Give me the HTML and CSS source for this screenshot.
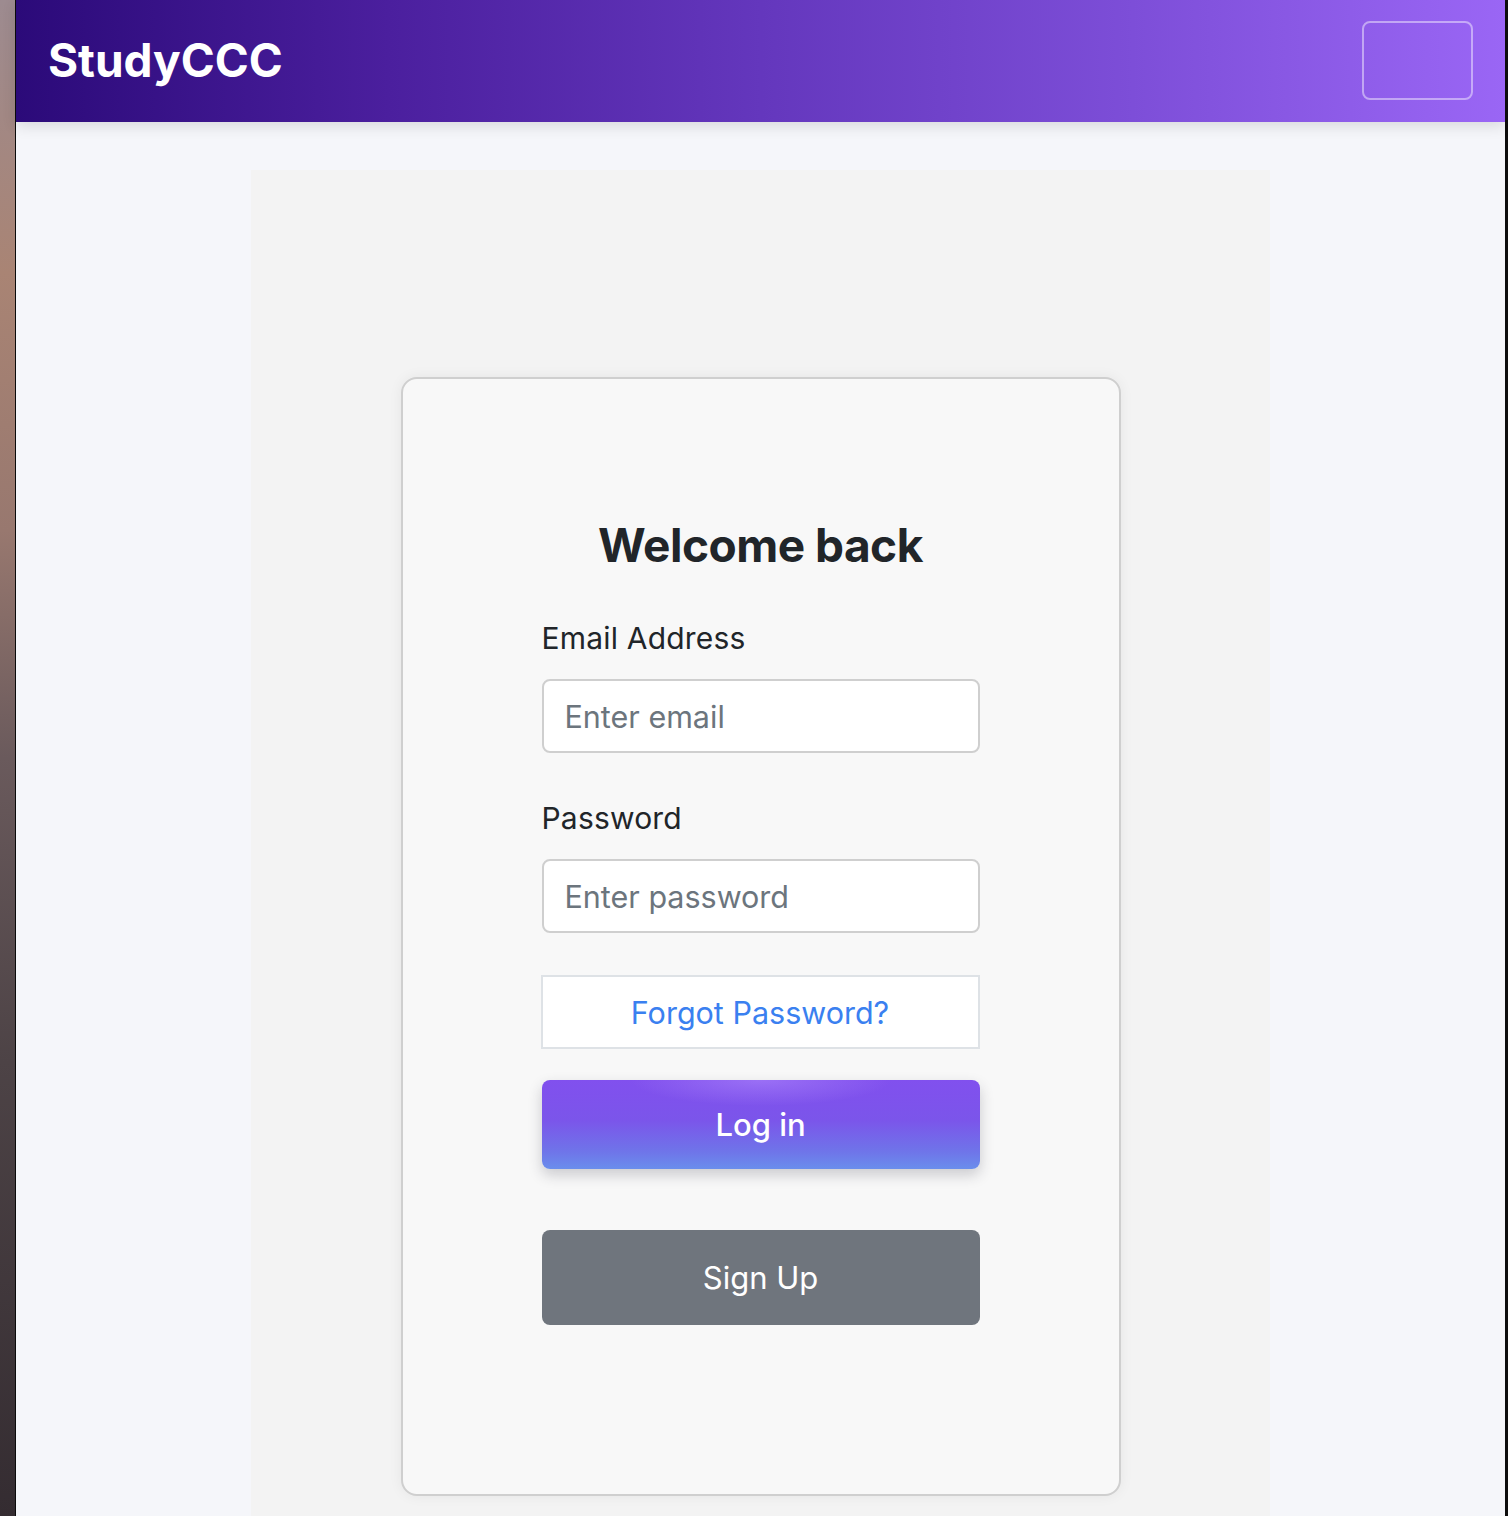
FILE: index.html
```html
<!DOCTYPE html>
<html lang="en">
<head>
<meta charset="utf-8">
<title>StudyCCC</title>
<link rel="stylesheet" href="styles.css">
</head>
<body>
<div class="desk-left"></div>
<div class="window">
  <header class="topbar">
    <div class="brand">StudyCCC</div>
    <button class="menu-btn" type="button" aria-label="Menu"></button>
  </header>
  <main class="main">
    <section class="panel">
      <form class="card">
        <h1 class="title">Welcome back</h1>
        <label class="label" for="email">Email Address</label>
        <input class="field" id="email" type="email" placeholder="Enter email">
        <label class="label label-pw" for="pw">Password</label>
        <input class="field" id="pw" type="password" placeholder="Enter password">
        <button class="btn-forgot" type="button">Forgot Password?</button>
        <button class="btn-login" type="button">Log in</button>
        <button class="btn-signup" type="button">Sign Up</button>
      </form>
    </section>
  </main>
</div>
<div class="desk-right"></div>
</body>
</html>
```
FILE: styles.css
```css
* { box-sizing: border-box; }
html, body { margin: 0; padding: 0; height: 100%; }
body {
  display: flex;
  width: 1508px;
  height: 1516px;
  overflow: hidden;
  background: #111;
  font-family: Inter, "Noto Sans", sans-serif;
}
.desk-left {
  width: 16px;
  flex: none;
  background: linear-gradient(180deg, #9d8b90 0%, #a98474 18%, #98786f 35%, #6a5a5c 50%, #4d4346 70%, #342c31 100%);
  border-right: 1px solid #0b0b0b;
}
.desk-right {
  width: 3px;
  flex: none;
  background: #0d0d0d;
}
.window {
  flex: 1;
  display: flex;
  flex-direction: column;
  background: #f5f6fa;
  min-width: 0;
}
.topbar {
  height: 122px;
  flex: none;
  display: flex;
  align-items: center;
  justify-content: space-between;
  padding: 0 32px 0 32px;
  background: linear-gradient(90deg, #2b0a79 0%, #4b1f9e 25%, #6437bd 50%, #7d4ed8 75%, #9a66f5 100%);
  box-shadow: 0 4px 14px rgba(0, 0, 0, 0.12);
  position: relative;
  z-index: 1;
}
.brand {
  color: #fff;
  font-family: Inter, "Liberation Sans", sans-serif;
  font-weight: 700;
  font-size: 46px;
  letter-spacing: 0;
  margin-top: -2px;
}
.menu-btn {
  width: 111px;
  height: 79px;
  margin-top: -2px;
  background: transparent;
  border: 2px solid rgba(255, 255, 255, 0.45);
  border-radius: 8px;
}
.main {
  flex: 1;
  padding-top: 48px;
  display: flex;
  justify-content: center;
}
.panel {
  width: 1019px;
  min-height: 1400px;
  background: #f3f3f3;
  padding-top: 207px;
  display: flex;
  justify-content: center;
  align-items: flex-start;
}
.card {
  width: 720px;
  height: 1119px;
  background: #f8f8f8;
  border: 2px solid #cfcfcf;
  border-radius: 16px;
  box-shadow: 0 0 14px rgba(0, 0, 0, 0.06);
  padding: 139px 139px 0 139px;
  display: flex;
  flex-direction: column;
}
.title {
  margin: 0;
  text-align: center;
  font-size: 46px;
  line-height: 55px;
  font-weight: 700;
  color: #212529;
  letter-spacing: -0.5px;
}
.label {
  margin-top: 48px;
  font-size: 30px;
  line-height: 35px;
  letter-spacing: 0.2px;
  color: #212529;
}
.label-pw { margin-top: 48px; }
.field {
  margin-top: 23px;
  width: 100%;
  height: 74px;
  border: 2px solid #cfcfcf;
  border-radius: 8px;
  background: #fff;
  padding: 0 21px;
  font-family: inherit;
  font-size: 30.5px;
  color: #212529;
}
.field::placeholder { color: #6c757d; }
.btn-forgot {
  margin-top: 42px;
  margin-left: -1px;
  width: calc(100% + 1px);
  height: 74px;
  background: #fff;
  border: 2px solid #dee2e6;
  border-radius: 0;
  font-family: inherit;
  font-size: 30.5px;
  color: #3a80f0;
}
.btn-login {
  margin-top: 31px;
  width: 100%;
  height: 89px;
  border: none;
  border-radius: 8px;
  background:
    radial-gradient(ellipse 130px 26px at 50% 0%, rgba(185, 150, 255, 0.45), rgba(185, 150, 255, 0) 100%),
    linear-gradient(180deg, #8150ee 0%, #7b55ea 45%, #6f74e9 80%, #6a8eec 100%);
  box-shadow: 0 6px 14px rgba(40, 40, 60, 0.22);
  font-family: inherit;
  font-size: 31px;
  font-weight: 500;
  color: #fff;
}
.btn-signup {
  margin-top: 61px;
  width: 100%;
  height: 95px;
  border: none;
  border-radius: 8px;
  background: #6f757d;
  font-family: inherit;
  font-size: 31px;
  color: #fff;
}
```
